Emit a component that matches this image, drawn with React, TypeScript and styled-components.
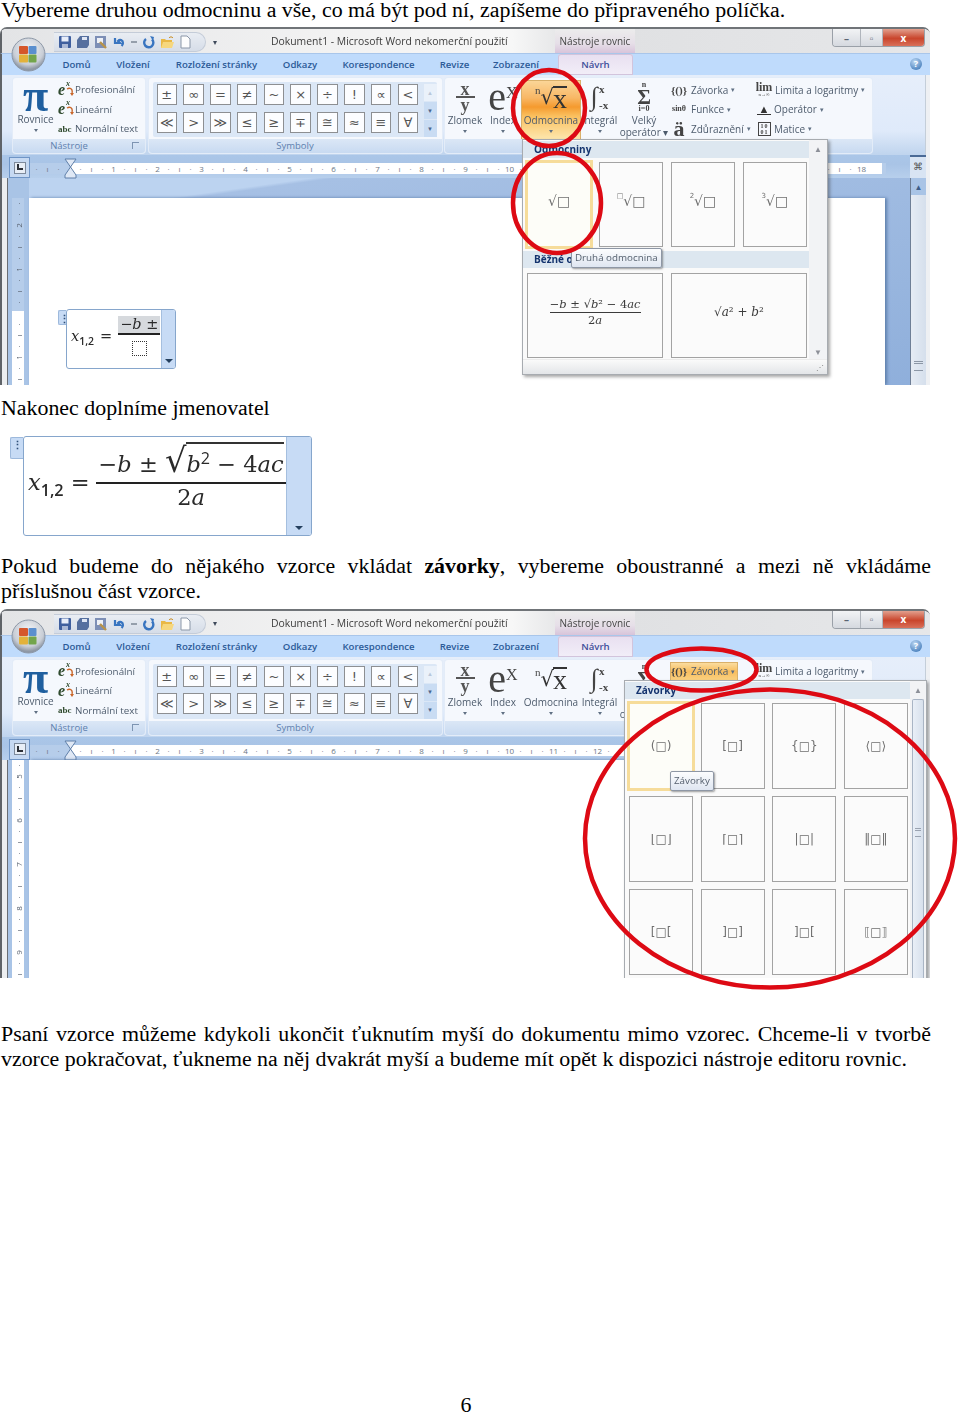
import React from "react";
import styled, { createGlobalStyle } from "styled-components";

const GlobalStyle = createGlobalStyle`
  html, body { margin: 0; padding: 0; background: #fff; }
  body { font-family: "Liberation Serif", "Times New Roman", serif; color: #000; }
`;

const UI_FONT = `"Open Sans", "Noto Sans", sans-serif`;
const MATH_FONT = `"DejaVu Serif", "Liberation Serif", serif`;

const Page = styled.div`
  width: 960px;
  height: 1414px;
  overflow: hidden;
  display: flex;
  flex-direction: column;
`;

const Para = styled.p<{ $top?: number; $justify?: boolean; $lh?: number }>`
  width: 930px;
  margin: ${(p) => p.$top ?? 0}px 0 0 1px;
  font-size: 21.9px;
  line-height: ${(p) => p.$lh ?? 25.5}px;
  text-align: ${(p) => (p.$justify ? "justify" : "left")};
  white-space: ${(p) => (p.$justify ? "normal" : "nowrap")};
`;

const PageNumber = styled.div`
  margin-top: auto;
  width: 932px;
  text-align: center;
  font-size: 21.9px;
  line-height: 18px;
`;

const ShotFrame = styled.div<{ $top: number; $h: number }>`
  position: relative;
  width: 930px;
  height: ${(p) => p.$h}px;
  margin-top: ${(p) => p.$top}px;
  flex: none;
`;

const Window = styled.div`
  width: 930px;
  height: 100%;
  display: flex;
  flex-direction: column;
  overflow: hidden;
  position: relative;
  border-radius: 7px 7px 0 0;
  border-top: 2px solid #707478;
  box-sizing: border-box;
  background: #eef0f3;
  font-family: ${UI_FONT};
  filter: blur(0.35px);
`;

/* title bar */
const TitleBar = styled.div`
  height: 24px;
  flex: none;
  display: flex;
  align-items: center;
  padding-left: 52px;
  background: linear-gradient(90deg, #e3e4e6 0%, #f2f2f2 35%, #f7f7f7 55%, #dfe0e2 62%, #e6e7e9 100%);
  border-left: 2px solid #5f6368;
  box-sizing: border-box;
`;

const Orb = styled.svg`
  position: absolute;
  left: 11px;
  top: 8px;
  width: 35px;
  height: 35px;
  z-index: 2;
`;

const QuickPill = styled.div`
  width: 152px;
  height: 20px;
  margin-top: 2px;
  display: flex;
  align-items: center;
  gap: 4px;
  padding-left: 4px;
  box-sizing: border-box;
  border-radius: 0 11px 11px 0;
  border: 1px solid #c4ccd8;
  border-left: none;
  background: linear-gradient(#e9edf3, #d6dde8);
`;

const QuickIcon = styled.svg<{ $w?: number }>`
  width: ${(p) => p.$w ?? 14}px;
  height: 14px;
  flex: none;
`;

const QuickArrow = styled.span`
  width: 65px;
  padding-left: 7px;
  box-sizing: border-box;
  font-size: 8px;
  color: #3f4a5a;
`;

const Title = styled.div`
  width: 284px;
  font-size: 10.4px;
  color: #3c3c3c;
  white-space: nowrap;
`;

const ContextTab = styled.div`
  width: 80px;
  height: 24px;
  display: flex;
  align-items: center;
  justify-content: center;
  font-size: 10px;
  color: #444;
  background: linear-gradient(#ececec, #e6dfe8 60%, #d8c4da);
`;

const WinControls = styled.div`
  display: flex;
  margin-left: auto;
  margin-right: 5px;
  height: 17px;
  align-self: flex-start;
  border: 1px solid #9aa0a8;
  border-top: none;
  border-radius: 0 0 4px 4px;
  overflow: hidden;
`;

const WinButton = styled.div<{ $w: number; $close?: boolean }>`
  width: ${(p) => p.$w}px;
  display: flex;
  align-items: center;
  justify-content: center;
  font-size: 10px;
  font-weight: 700;
  color: ${(p) => (p.$close ? "#fff" : "#5a6472")};
  background: ${(p) =>
    p.$close
      ? "linear-gradient(#e2a08e, #c9452c 55%, #d9705a)"
      : "linear-gradient(#f2f3f5, #d5d9df)"};
  border-right: ${(p) => (p.$close ? "none" : "1px solid #b0b5bc")};
`;

/* tabs */
const TabBar = styled.div`
  height: 22px;
  flex: none;
  display: flex;
  padding-left: 48px;
  background: #bfdbfc;
  border-top: 1px solid #a9c6ea;
  border-left: 2px solid #5f6368;
  box-sizing: border-box;
  position: relative;
`;

const Tab = styled.div<{ $w: number; $active?: boolean }>`
  width: ${(p) => p.$w}px;
  margin-left: ${(p) => (p.$active ? 8 : 0)}px;
  display: flex;
  align-items: center;
  justify-content: center;
  font-size: 9.6px;
  font-weight: 600;
  background: ${(p) => (p.$active ? "linear-gradient(#e8dff0, #f2eef8)" : "none")};
  border-radius: 3px 3px 0 0;
  box-shadow: ${(p) => (p.$active ? "inset 0 0 0 1px #d2c4dc" : "none")};
  color: ${(p) => (p.$active ? "#3f4f9a" : "#2b5a97")};
`;

const HelpDot = styled.div`
  position: absolute;
  right: 8px;
  top: 4px;
  width: 12px;
  height: 12px;
  border-radius: 50%;
  background: radial-gradient(circle at 40% 30%, #bcd7f2, #2d6bb0);
  color: #fff;
  font-size: 9px;
  font-weight: 700;
  line-height: 12px;
  text-align: center;
`;

/* ribbon */
const Ribbon = styled.div`
  height: 80px;
  flex: none;
  display: flex;
  gap: 3.5px;
  padding: 3px 0 2px 11px;
  box-sizing: border-box;
  background: linear-gradient(#e6eefa, #dfeafa 70%, #bfd4ee);
  border-left: 2px solid #5f6368;
  margin-right: 4px;
  border-right: 1px solid #c4ced9;
`;

const Group = styled.div<{ $w: number }>`
  width: ${(p) => p.$w}px;
  display: flex;
  flex-direction: column;
  border-radius: 3px;
  overflow: hidden;
  background: #f5f8fd;
  box-shadow: 0 0 0 1px #e3ecf8;
`;

const GroupBody = styled.div`
  flex: 1;
  display: flex;
  min-height: 0;
`;

const GroupFooter = styled.div<{ $shift?: number }>`
  height: 14px;
  flex: none;
  position: relative;
  text-align: center;
  padding-right: ${(p) => p.$shift ?? 0}px;
  font-size: 9.5px;
  line-height: 13px;
  color: #5d80ae;
  background: linear-gradient(#dbe7f6, #c8daf1);
`;

const Launcher = styled.span`
  position: absolute;
  right: 6px;
  top: 3px;
  width: 6px;
  height: 6px;
  border: 1px solid #7d94b2;
  border-width: 1px 0 0 1px;
`;

const PiColumn = styled.div`
  width: 45px;
  display: flex;
  flex-direction: column;
  align-items: center;
  flex: none;
`;

const PiGlyph = styled.div`
  height: 35px;
  font-family: "Liberation Serif", serif;
  font-size: 46px;
  line-height: 35px;
  color: #1f5f9f;
  font-weight: 700;
`;

const SmallLabel = styled.div`
  font-size: 10px;
  line-height: 12px;
  color: #4d5b6c;
  text-align: center;
  white-space: nowrap;
`;

const DropArrow = styled.div`
  width: 0;
  height: 0;
  margin: 4px auto 0;
  border: 2.5px solid transparent;
  border-top: 3px solid #5f6f83;
  border-bottom: none;
`;

const ToolColumn = styled.div`
  display: flex;
  flex-direction: column;
  padding-top: 2px;
`;

const ToolRow = styled.div`
  height: 19.5px;
  display: flex;
  align-items: center;
  gap: 1px;
  font-size: 9.8px;
  color: #4d5b6c;
  white-space: nowrap;
`;

const ToolGlyph = styled.span<{ $small?: boolean }>`
  width: 16px;
  flex: none;
  font-family: "Liberation Serif", serif;
  font-style: ${(p) => (p.$small ? "normal" : "italic")};
  font-weight: 700;
  font-size: ${(p) => (p.$small ? 9 : 16)}px;
  line-height: 14px;
  color: #2f4a2e;
  position: relative;
`;

const ToolSup = styled.span`
  position: absolute;
  left: 8px;
  top: -3px;
  font-size: 8px;
  line-height: 8px;
`;

const ToolArrow = styled.svg`
  position: absolute;
  left: 8px;
  top: 4px;
  width: 8px;
  height: 9px;
`;

const SymbolGallery = styled.div`
  margin: 4px 0 0 4px;
  height: 55px;
  width: 284px;
  display: flex;
  background: #dbe7f6;
  border-radius: 2px;
  box-sizing: border-box;
  padding: 2px 0 0 4px;
`;

const SymbolGrid = styled.div`
  width: 267px;
  display: grid;
  grid-template-columns: repeat(10, 20.6px);
  grid-auto-rows: 21px;
  column-gap: 6.2px;
  row-gap: 6.5px;
`;

const SymbolCell = styled.div`
  display: flex;
  align-items: center;
  justify-content: center;
  background: #fcfdff;
  border: 1px solid #8d8f92;
  box-sizing: border-box;
  font-family: "DejaVu Sans", sans-serif;
  font-size: 13px;
  color: #555;
`;

const GalleryScroll = styled.div`
  width: 13px;
  margin-left: 1px;
  display: flex;
  flex-direction: column;
  gap: 1px;
`;

const GalleryStep = styled.div<{ $dim?: boolean }>`
  flex: 1;
  display: flex;
  align-items: center;
  justify-content: center;
  font-size: 6px;
  background: ${(p) => (p.$dim ? "#eaf1fa" : "#c9dcf3")};
  color: ${(p) => (p.$dim ? "#b9c7d9" : "#4a668c")};
`;

const StructButton = styled.div<{ $w: number; $on?: boolean }>`
  width: ${(p) => p.$w}px;
  flex: none;
  margin-top: 2px;
  height: 60px;
  display: flex;
  flex-direction: column;
  align-items: center;
  background: ${(p) =>
    p.$on ? "linear-gradient(#fbd79a, #f8b765 30%, #f59a2e 45%, #fac05f 60%, #fde8b0)" : "none"};
  box-shadow: ${(p) => (p.$on ? "inset 0 0 0 1px #d9b06a" : "none")};
`;

const StructIcon = styled.div`
  height: 34px;
  display: flex;
  align-items: center;
  justify-content: center;
  font-family: "Liberation Serif", serif;
  color: #444;
  white-space: nowrap;
`;

const FracIcon = styled.div`
  display: flex;
  flex-direction: column;
  align-items: center;
  font-weight: 700;
  font-size: 18px;
  line-height: 13px;
  color: #555;

  span + span {
    border-top: 2px solid #555;
    padding: 1px 5px 0;
  }
`;

const Big = styled.span<{ $size: number }>`
  font-size: ${(p) => p.$size}px;
  line-height: 34px;
`;

const Corner = styled.span<{ $size: number; $top: number }>`
  align-self: flex-start;
  margin-top: ${(p) => p.$top}px;
  font-size: ${(p) => p.$size}px;
  line-height: ${(p) => p.$size}px;
`;

const RootSign = styled.span`
  font-family: "DejaVu Sans", sans-serif;
  font-size: 21px;
  line-height: 26px;
  color: #333;
`;

const RootBody = styled.span`
  font-size: 28px;
  line-height: 21px;
  border-top: 2px solid #333;
  margin-left: -1px;
  color: #333;
`;

const LimitsIcon = styled.div`
  display: flex;
  align-items: center;
  gap: 1px;
  font-size: 26px;
`;

const LimitsText = styled.div`
  display: flex;
  flex-direction: column;
  font-size: 11px;
  line-height: 16px;
  font-weight: 700;
`;

const SigmaIcon = styled.div`
  display: flex;
  flex-direction: column;
  align-items: center;
  font-size: 21px;
  line-height: 16px;
  font-weight: 700;

  small {
    font-size: 8px;
    line-height: 8px;
  }
`;

const TwoLine = styled(SmallLabel)`
  line-height: 12px;
  display: flex;
  flex-direction: column;
`;

const ListColumn = styled.div<{ $w: number }>`
  width: ${(p) => p.$w}px;
  flex: none;
  padding-top: 2px;
`;

const ListRow = styled.div<{ $on?: boolean }>`
  height: 19.5px;
  display: flex;
  align-items: center;
  gap: 3px;
  font-size: 10px;
  color: #4d5b6c;
  white-space: nowrap;
  width: ${(p) => (p.$on ? "68px" : "auto")};
  background: ${(p) => (p.$on ? "linear-gradient(#fbe0a6, #f8bd5e 50%, #fbd384)" : "none")};
  box-shadow: ${(p) => (p.$on ? "inset 0 0 0 1px #d9b06a" : "none")};
`;

const ListGlyph = styled.span<{ $w: number; $size?: number }>`
  width: ${(p) => p.$w}px;
  flex: none;
  text-align: center;
  font-family: "Liberation Serif", serif;
  font-weight: 700;
  font-size: ${(p) => p.$size ?? 11}px;
  line-height: 14px;
  color: #444;
`;

const LimGlyph = styled(ListGlyph)`
  line-height: 9px;
  display: flex;
  flex-direction: column;
  align-items: center;

  small {
    font-size: 5px;
    line-height: 5px;
    font-weight: 400;
  }
`;

const OperatorGlyph = styled(ListGlyph)`
  line-height: 10px;
  border-bottom: 1px solid #333;
  width: 14px;
  margin-left: 1px;
  color: #333;
`;

const MatrixGlyph = styled(ListGlyph)`
  font-size: 6px;
  line-height: 6px;
  width: 13px;
  margin-left: 2px;
  border: solid #444;
  border-width: 1px 1px;
  box-sizing: border-box;
  letter-spacing: 1px;
`;

const Caret = styled.span`
  font-size: 7px;
  color: #5f6f83;
`;

/* ruler */
const RulerRow = styled.div`
  height: 23px;
  flex: none;
  display: flex;
  align-items: flex-start;
  background: linear-gradient(#aac6e8, #a9c4e6 40%, #b7cfec);
  border-left: 2px solid #5f6368;
  box-sizing: border-box;
  position: relative;
  margin-right: 4px;
`;

const RulerCorner = styled.div`
  width: 21px;
  height: 21px;
  margin: 2px 0 0 7px;
  flex: none;
  box-sizing: border-box;
  border: 1px solid #6f95c6;
  background: #c6d9f2;
  display: flex;
  align-items: center;
  justify-content: center;

  &::before {
    content: "";
    position: absolute;
    width: 10px;
    height: 10px;
    background: #e8eef6;
    border: 1px solid #7d8a9c;
  }

  &::after {
    content: "";
    position: relative;
    width: 4px;
    height: 4px;
    margin: -1px 0 0 1px;
    border: solid #2c3038;
    border-width: 0 0 2px 2px;
  }
`;

const RulerStrip = styled.div`
  width: 856px;
  height: 11px;
  margin: 8px 0 0 0;
  flex: none;
  display: flex;
  padding-left: 1px;
  box-sizing: border-box;
  overflow: hidden;
  background: linear-gradient(90deg, #b6cdea 0 41px, #fff 41px 852px, #b6cdea 852px);
`;

const RulerSlot = styled.div`
  width: 11px;
  flex: none;
  text-align: center;
  font-family: ${UI_FONT};
  font-size: 8px;
  line-height: 11px;
  color: #6d7785;
`;

const IndentMarker = styled.svg`
  position: absolute;
  left: 62px;
  top: 3px;
  width: 13px;
  height: 21px;
`;

const RulerToggle = styled.div`
  position: absolute;
  right: 0;
  top: 0;
  width: 16px;
  height: 23px;
  background: #d8e4f3;
  border-top: 2px solid #4a6a96;
  box-sizing: border-box;
  font-size: 10px;
  line-height: 18px;
  text-align: center;
  color: #555;
`;

/* document area */
const DocRow = styled.div`
  flex: 1;
  min-height: 0;
  display: flex;
  border-left: 2px solid #5f6368;
  margin-right: 4px;
`;

const LeftEdge = styled.div`
  width: 5px;
  flex: none;
  background: #eceef0;
  border-right: 1px solid #6a6e74;
`;

const LeftDesk = styled.div`
  width: 21px;
  flex: none;
  background: #a9c4e6;
  padding-left: 4px;
  box-sizing: border-box;
`;

const VRuler = styled.div<{ $top: number; $blue: number }>`
  width: 12px;
  height: 100%;
  margin-top: ${(p) => p.$top}px;
  overflow: hidden;
  background: linear-gradient(#b6cdea 0 ${(p) => p.$blue}px, #fff ${(p) => p.$blue}px);
`;

const VSlot = styled.div`
  height: 11px;
  display: flex;
  align-items: center;
  justify-content: center;
  font-size: 8px;
  line-height: 11px;
  color: #5a6472;
  transform: rotate(-90deg);
`;

const Desk = styled.div<{ $top: number }>`
  flex: 1;
  min-width: 0;
  padding-top: ${(p) => p.$top}px;
  background: linear-gradient(172deg, #bcd3f0 0 12%, #a6c0e4 13%, #8fafdb 100%);
`;

const DocPage = styled.div`
  width: 856px;
  height: 100%;
  background: #fff;
  box-shadow: 2px 0 3px #5e7fac;
  padding: 111px 0 0 37px;
  box-sizing: border-box;
  position: relative;
`;

const SideScroll = styled.div`
  width: 16px;
  flex: none;
  background: linear-gradient(90deg, #e6ecf4, #d5dfec);
  display: flex;
  flex-direction: column;
  border-left: 1px solid #6f7f96;
  box-sizing: border-box;
`;

const SideArrow = styled.div`
  height: 17px;
  flex: none;
  background: #a9c4e6;
  font-size: 8px;
  text-align: center;
  line-height: 17px;
  color: #3d5d88;
`;

const SideGrip = styled.div`
  margin: auto 3px 14px;
  height: 6px;
  border-top: 3px double #8c97a6;
  border-bottom: 1px solid #8c97a6;
`;

/* equation */
const EquationWrap = styled.div<{ $h: number; $w: number; $left: number; $top?: number; $tab: number }>`
  position: relative;
  width: ${(p) => p.$w}px;
  height: ${(p) => p.$h}px;
  margin: ${(p) => p.$top ?? 0}px 0 0 ${(p) => p.$left}px;
  box-sizing: border-box;
  flex: none;
  border: 1px solid #86a6cc;
  border-radius: 3px;
  display: flex;
  background: #fff;
  padding-right: ${(p) => p.$tab}px;
  filter: blur(0.3px);
`;

const EquationTab = styled.div<{ $w: number }>`
  position: absolute;
  right: 0;
  top: 0;
  bottom: 0;
  width: ${(p) => p.$w}px;
  background: #c7dbf5;
  border-left: 1px solid #a5bfdf;
  border-radius: 0 2px 2px 0;

  &::after {
    content: "";
    position: absolute;
    left: 50%;
    bottom: 5px;
    margin-left: -4px;
    border: 4px solid transparent;
    border-top: 4px solid #25405f;
    border-bottom: none;
  }
`;

const EquationHandle = styled.div<{ $w: number; $h: number }>`
  position: absolute;
  left: -${(p) => p.$w + 1}px;
  top: 0;
  width: ${(p) => p.$w}px;
  height: ${(p) => p.$h}px;
  background: #c7dbf5;
  border: 1px solid #9db9dc;
  border-right: none;
  border-radius: 2px 0 0 2px;
  box-sizing: border-box;
  color: #2f4f78;
  font-size: 11px;
  line-height: 13px;
  text-align: center;
  font-weight: 700;
  padding-top: 1px;
`;

const MathRow = styled.div<{ $size: number; $pad: number; $gap: number }>`
  display: flex;
  align-items: center;
  gap: ${(p) => p.$gap}px;
  padding: 0 0 ${(p) => p.$pad}px 4px;
  font-family: ${MATH_FONT};
  font-size: ${(p) => p.$size}px;
  color: #2a2a2a;
  white-space: nowrap;
`;

const MathVar = styled.span`
  font-style: italic;
`;

const MathSub = styled.sub`
  font-size: 0.72em;
  font-style: normal;
  line-height: 0;
  font-family: ${UI_FONT};
  font-weight: 600;
`;

const MathSup = styled.sup`
  font-size: 0.72em;
  line-height: 0;
  font-family: ${UI_FONT};
`;

const Fraction = styled.div`
  display: flex;
  flex-direction: column;
  align-items: center;
`;

const Numerator = styled.div<{ $shade?: boolean; $gap?: number }>`
  padding: 0 2px ${(p) => p.$gap ?? 1}px;
  line-height: 1.12;
  background: ${(p) => (p.$shade ? "#d6d9dd" : "none")};
`;

const Denominator = styled.div<{ $gap?: number }>`
  align-self: stretch;
  text-align: center;
  border-top: 2px solid #222;
  padding-top: ${(p) => p.$gap ?? 2}px;
  line-height: 1.2;
`;

const RadicalSign = styled.span`
  font-size: 1.5em;
  line-height: 0;
`;

const RadicalBody = styled.span`
  border-top: 2px solid #333;
  padding-top: 7px;
`;

const EmptySlot = styled.span`
  display: block;
  width: 13px;
  height: 13px;
  margin: 4px auto 0;
  border: 1px dotted #333;
`;

/* drop-down galleries */
const Popup = styled.div<{ $x: number; $y: number; $w: number; $h: number }>`
  position: absolute;
  left: ${(p) => p.$x}px;
  top: ${(p) => p.$y}px;
  width: ${(p) => p.$w}px;
  height: ${(p) => p.$h}px;
  box-sizing: border-box;
  background: #fafafa;
  border: 1px solid #a7abb0;
  box-shadow: 2px 2px 3px rgba(60, 60, 60, 0.45);
  z-index: 3;
  display: flex;
`;

const PopupMain = styled.div`
  flex: 1;
  min-width: 0;
`;

const PopupHead = styled.div<{ $top?: number }>`
  height: 17px;
  margin-top: ${(p) => p.$top ?? 1}px;
  padding-left: 11px;
  font-size: 10px;
  font-weight: 700;
  line-height: 16px;
  color: #14336e;
  background: #dde7f0;
`;

const TileGrid = styled.div<{ $cols: number; $pad: number }>`
  display: grid;
  grid-template-columns: repeat(${(p) => p.$cols}, 1fr);
  gap: 7px 7.5px;
  padding: ${(p) => p.$pad}px 2px 4px 4px;
`;

const Tile = styled.div<{ $h: number; $selected?: boolean; $lift?: number }>`
  height: ${(p) => p.$h}px;
  box-sizing: border-box;
  background: ${(p) => (p.$selected ? "#fdfdf8" : "#fbfbfb")};
  border: 1px solid #a3a3a3;
  outline: ${(p) => (p.$selected ? "3px solid #f6dc9a" : "none")};
  outline-offset: -1px;
  padding-bottom: ${(p) => p.$lift ?? 0}px;
  display: flex;
  align-items: center;
  justify-content: center;
  font-family: "DejaVu Sans", sans-serif;
  font-size: 12px;
  color: #6f6f6f;
  white-space: nowrap;
`;

const RootIndex = styled.span`
  align-self: center;
  margin-bottom: 8px;
  font-size: 7px;
  line-height: 7px;
`;

const TileRoot = styled.span`
  font-size: 14px;
`;

const TileMath = styled.div<{ $size: number }>`
  font-family: ${MATH_FONT};
  font-size: ${(p) => p.$size}px;
  color: #3b3b3b;
  display: flex;
  flex-direction: column;
  align-items: center;
  line-height: 1.3;
`;

const TileBar = styled.div`
  align-self: stretch;
  text-align: center;
  border-top: 1px solid #3b3b3b;
`;

const PopupSideBar = styled.div<{ $w: number }>`
  width: ${(p) => p.$w}px;
  flex: none;
  display: flex;
  flex-direction: column;
  align-items: center;
  background: #f2f3f5;
  font-size: 8px;
  color: #8d9098;
  padding-top: 3px;
  box-sizing: border-box;
`;

const PopupDown = styled.span`
  margin-top: auto;
  margin-bottom: 17px;
`;

const PopupThumb = styled.div`
  flex: 1;
  width: 12px;
  margin-top: 4px;
  background: linear-gradient(90deg, #e9eff7, #d7e0ec);
  border: 1px solid #a9b5c5;
  border-bottom: none;
  border-radius: 2px 2px 0 0;
  box-sizing: border-box;
  position: relative;

  &::after {
    content: "";
    position: absolute;
    left: 2px;
    right: 2px;
    top: 46%;
    height: 5px;
    border-top: 3px double #9aa3b1;
    border-bottom: 1px solid #9aa3b1;
  }
`;

const PopupStatus = styled.div`
  position: absolute;
  left: 0;
  right: 0;
  bottom: 0;
  height: 15px;
  background: linear-gradient(#fafafa, #e3e5e8);
  border-top: 1px solid #ececec;
  font-size: 8px;
  line-height: 14px;
  text-align: right;
  padding-right: 3px;
  box-sizing: border-box;
  color: #888;
`;

const Tooltip = styled.div<{ $x: number; $y: number }>`
  position: absolute;
  left: ${(p) => p.$x}px;
  top: ${(p) => p.$y}px;
  z-index: 4;
  padding: 2px 3px;
  font-size: 9.8px;
  line-height: 14px;
  color: #55606e;
  background: linear-gradient(#fcfdfe, #dfe6f1);
  border: 1px solid #8e97a5;
  border-radius: 2px;
  box-shadow: 1px 1px 2px rgba(60, 60, 60, 0.5);
  white-space: nowrap;
`;

const RedMarks = styled.svg`
  position: absolute;
  left: 0;
  top: 0;
  width: 930px;
  height: 100%;
  overflow: visible;
  z-index: 6;
  pointer-events: none;
`;

const RedEllipse = styled.ellipse`
  fill: none;
  stroke: #dd0a14;
  stroke-width: 4.5;
`;

const symbols = ["±", "∞", "=", "≠", "~", "×", "÷", "!", "∝", "<", "≪", ">", "≫", "≤", "≥", "∓", "≅", "≈", "≡", "∀"];

const tabs: [string, number][] = [
  ["Domů", 53],
  ["Vložení", 60],
  ["Rozložení stránky", 107],
  ["Odkazy", 60],
  ["Korespondence", 97],
  ["Revize", 55],
  ["Zobrazení", 68],
];

const rulerLabels = ["·", "ı", "·", ""].concat(
  ...Array.from({ length: 18 }, (_, i) => ["·", "ı", "·", String(i + 1)])
);

const rootIndexes = ["", "□", "2", "3"];
const bracketTiles = ["(□)", "[□]", "{□}", "⟨□⟩", "⌊□⌋", "⌈□⌉", "|□|", "‖□‖", "[□[", "]□]", "]□[", "⟦□⟧"];

const vLabelsTop = ["·", "·", "2", "·", "ı", "·", "1", "·", "ı", "·", "", "·", "ı", "·", "1", "·", "ı"];
const vLabelsBottom = ["·", "5", "·", "ı", "·", "6", "·", "ı", "·", "7", "·", "ı", "·", "8", "·", "ı", "·", "9", "·", "ı", "·"];

const Quick = () => (
  <>
    <QuickIcon viewBox="0 0 14 14">
      <rect x="1" y="1" width="12" height="12" rx="1" fill="#3f5f9e" />
      <rect x="3.5" y="1.5" width="7" height="5" fill="#e8eefa" />
      <rect x="4" y="9" width="6" height="4" fill="#aab8d6" />
    </QuickIcon>
    <QuickIcon viewBox="0 0 14 14">
      <path d="M4 1h9v9l-2 3H1V5z" fill="#56709f" />
      <rect x="6" y="2" width="5" height="3" fill="#dfe6f4" />
    </QuickIcon>
    <QuickIcon viewBox="0 0 14 14">
      <rect x="1" y="1" width="11" height="12" fill="#7d8fb6" />
      <rect x="3" y="3" width="6" height="5" fill="#eef1f7" />
      <path d="M6 7l6 6" stroke="#b9934a" strokeWidth="2.4" />
    </QuickIcon>
    <QuickIcon viewBox="0 0 14 14">
      <path d="M3 3v5h5L6 6c2-2 5-1 5 2 0 1-.6 2-1.400 3" fill="none" stroke="#3975c0" strokeWidth="2.2" />
    </QuickIcon>
    <QuickIcon viewBox="0 0 8 14" $w={8}>
      <path d="M1 7h6" stroke="#7d8794" strokeWidth="1.4" />
    </QuickIcon>
    <QuickIcon viewBox="0 0 14 14">
      <path d="M4 4a4.600 4.600 0 1 0 6 .4" fill="none" stroke="#3975c0" strokeWidth="2.4" />
      <path d="M8 1l4 1-1 4z" fill="#3975c0" />
    </QuickIcon>
    <QuickIcon viewBox="0 0 14 14">
      <path d="M1 4h4l1 1h6v8H1z" fill="#e9b846" />
      <path d="M3 7h11l-2 6H1z" fill="#f6d77e" />
      <path d="M9 3c1-1.500 3-1.500 4 0" stroke="#c98a1c" fill="none" />
    </QuickIcon>
    <QuickIcon viewBox="0 0 14 14">
      <path d="M3 1h6l3 3v9H3z" fill="#fdfdfd" stroke="#8b97a8" />
    </QuickIcon>
  </>
);

const OfficeOrb = ({ id }: { id: string }) => (
  <Orb viewBox="0 0 35 35">
    <defs>
      <radialGradient id={id} cx="50%" cy="35%" r="60%">
        <stop offset="0%" stopColor="#f5f6f8" />
        <stop offset="75%" stopColor="#c9ced6" />
        <stop offset="100%" stopColor="#8f98a5" />
      </radialGradient>
    </defs>
    <circle cx="17.5" cy="17.5" r="16.5" fill={`url(#${id})`} stroke="#8c97a6" />
    <rect x="8" y="9" width="9" height="8" rx="1" fill="#d5572b" />
    <rect x="17.5" y="9" width="8" height="8" rx="1" fill="#5b8fce" />
    <rect x="8" y="17.5" width="9" height="8" rx="1" fill="#e3b23a" />
    <rect x="17.5" y="17.5" width="8" height="8" rx="1" fill="#73a54b" />
  </Orb>
);

const ExGlyph = () => (
  <ToolGlyph>
    e<ToolSup>x</ToolSup>
    <ToolArrow viewBox="0 0 8 9">
      <path d="M1 2c3-2 6 0 5 4" fill="none" stroke="#c9662a" strokeWidth="1.400" />
      <path d="M4 6h4L6 9z" fill="#c9662a" />
    </ToolArrow>
  </ToolGlyph>
);

const Chrome = ({ highlight, id }: { highlight: "root" | "bracket"; id: string }) => (
  <>
    <OfficeOrb id={id} />
    <TitleBar>
      <QuickPill>
        <Quick />
      </QuickPill>
      <QuickArrow>▾</QuickArrow>
      <Title>Dokument1 - Microsoft Word nekomerční použití</Title>
      <ContextTab>Nástroje rovnic</ContextTab>
      <WinControls>
        <WinButton $w={27}>–</WinButton>
        <WinButton $w={21}>▫</WinButton>
        <WinButton $w={41} $close>
          x
        </WinButton>
      </WinControls>
    </TitleBar>
    <TabBar>
      {tabs.map(([name, w]) => (
        <Tab key={name} $w={w}>
          {name}
        </Tab>
      ))}
      <Tab $w={75} $active>
        Návrh
      </Tab>
      <HelpDot>?</HelpDot>
    </TabBar>
    <Ribbon>
      <Group $w={132}>
        <GroupBody>
          <PiColumn>
            <PiGlyph>π</PiGlyph>
            <SmallLabel>Rovnice</SmallLabel>
            <DropArrow />
          </PiColumn>
          <ToolColumn>
            <ToolRow>
              <ExGlyph />
              Profesionální
            </ToolRow>
            <ToolRow>
              <ExGlyph />
              Lineární
            </ToolRow>
            <ToolRow>
              <ToolGlyph $small>abc</ToolGlyph>Normální text
            </ToolRow>
          </ToolColumn>
        </GroupBody>
        <GroupFooter $shift={20}>
          Nástroje
          <Launcher />
        </GroupFooter>
      </Group>
      <Group $w={293}>
        <GroupBody>
          <SymbolGallery>
            <SymbolGrid>
              {symbols.map((s) => (
                <SymbolCell key={s}>{s}</SymbolCell>
              ))}
            </SymbolGrid>
            <GalleryScroll>
              <GalleryStep $dim>▲</GalleryStep>
              <GalleryStep>▼</GalleryStep>
              <GalleryStep>▼</GalleryStep>
            </GalleryScroll>
          </SymbolGallery>
        </GroupBody>
        <GroupFooter>Symboly</GroupFooter>
      </Group>
      <Group $w={427}>
        <GroupBody>
          <StructButton $w={40}>
            <StructIcon>
              <FracIcon>
                <span>x</span>
                <span>y</span>
              </FracIcon>
            </StructIcon>
            <SmallLabel>Zlomek</SmallLabel>
            <DropArrow />
          </StructButton>
          <StructButton $w={36}>
            <StructIcon>
              <Big $size={40}>e</Big>
              <Corner $size={16} $top={5}>
                X
              </Corner>
            </StructIcon>
            <SmallLabel>Index</SmallLabel>
            <DropArrow />
          </StructButton>
          <StructButton $w={60} $on={highlight === "root"}>
            <StructIcon>
              <Corner $size={11} $top={5}>
                n
              </Corner>
              <RootSign>√</RootSign>
              <RootBody>x</RootBody>
            </StructIcon>
            <SmallLabel>Odmocnina</SmallLabel>
            <DropArrow />
          </StructButton>
          <StructButton $w={37}>
            <StructIcon>
              <LimitsIcon>
                ∫
                <LimitsText>
                  <span>x</span>
                  <span>-x</span>
                </LimitsText>
              </LimitsIcon>
            </StructIcon>
            <SmallLabel>Integrál</SmallLabel>
            <DropArrow />
          </StructButton>
          <StructButton $w={52}>
            <StructIcon>
              <SigmaIcon>
                <small>n</small>Σ<small>i=0</small>
              </SigmaIcon>
            </StructIcon>
            <TwoLine>
              <span>Velký</span>
              <span>operátor ▾</span>
            </TwoLine>
          </StructButton>
          <ListColumn $w={86}>
            <ListRow $on={highlight === "bracket"}>
              <ListGlyph $w={18}>{"{()}"}</ListGlyph>Závorka <Caret>▾</Caret>
            </ListRow>
            <ListRow>
              <ListGlyph $w={18} $size={8}>
                sinθ
              </ListGlyph>
              Funkce <Caret>▾</Caret>
            </ListRow>
            <ListRow>
              <ListGlyph $w={18} $size={22}>
                ä
              </ListGlyph>
              Zdůraznění <Caret>▾</Caret>
            </ListRow>
          </ListColumn>
          <ListColumn $w={110}>
            <ListRow>
              <LimGlyph $w={16} $size={12}>
                lim
                <small>n→∞</small>
              </LimGlyph>
              Limita a logaritmy <Caret>▾</Caret>
            </ListRow>
            <ListRow>
              <OperatorGlyph $w={14}>▲</OperatorGlyph>
              Operátor <Caret>▾</Caret>
            </ListRow>
            <ListRow>
              <MatrixGlyph $w={13}>
                10
                <br />
                01
              </MatrixGlyph>
              Matice <Caret>▾</Caret>
            </ListRow>
          </ListColumn>
        </GroupBody>
        <GroupFooter />
      </Group>
    </Ribbon>
    <RulerRow>
      <RulerCorner />
      <RulerStrip>
        {rulerLabels.map((label, i) => (
          <RulerSlot key={i}>{label}</RulerSlot>
        ))}
      </RulerStrip>
      <IndentMarker viewBox="0 0 13 21">
        <path d="M1 1h11L6.500 9zM6.500 9L1 17v3h11v-3z" fill="#dfe8f5" stroke="#5f7fa8" />
      </IndentMarker>
      <RulerToggle>⌘</RulerToggle>
    </RulerRow>
  </>
);

const SideBar = () => (
  <SideScroll>
    <SideArrow>▲</SideArrow>
    <SideGrip />
  </SideScroll>
);

export default function App() {
  return (
    <Page>
      <GlobalStyle />
      <Para $lh={20}>Vybereme druhou odmocninu a vše, co má být pod ní, zapíšeme do připraveného políčka.</Para>

      <ShotFrame $top={7} $h={358}>
        <Window>
          <Chrome highlight="root" id="orb-a" />
          <DocRow>
            <LeftEdge />
            <LeftDesk>
              <VRuler $top={20} $blue={113}>
                {vLabelsTop.map((l, i) => (
                  <VSlot key={i}>{l}</VSlot>
                ))}
              </VRuler>
            </LeftDesk>
            <Desk $top={20}>
              <DocPage>
                <EquationWrap $w={110} $h={60} $left={0} $tab={13}>
                  <EquationHandle $w={8} $h={15}>
                    ⋮
                  </EquationHandle>
                  <MathRow $size={14.5} $pad={6} $gap={6}>
                    <span>
                      <MathVar>x</MathVar>
                      <MathSub>1,2</MathSub>
                    </span>
                    =
                    <Fraction>
                      <Numerator $shade>
                        <MathVar>−b</MathVar> ±
                      </Numerator>
                      <Denominator>
                        <EmptySlot />
                      </Denominator>
                    </Fraction>
                  </MathRow>
                  <EquationTab $w={13} />
                </EquationWrap>
              </DocPage>
            </Desk>
            <SideBar />
          </DocRow>
          <Popup $x={522} $y={110} $w={306} $h={236}>
            <PopupMain>
              <PopupHead>Odmocniny</PopupHead>
              <TileGrid $cols={4} $pad={4}>
                {rootIndexes.map((idx, i) => (
                  <Tile key={i} $h={85} $lift={8} $selected={i === 0}>
                    {idx && <RootIndex>{idx}</RootIndex>}
                    <TileRoot>√□</TileRoot>
                  </Tile>
                ))}
              </TileGrid>
              <PopupHead $top={0}>Běžné odmocniny</PopupHead>
              <TileGrid $cols={2} $pad={5}>
                <Tile $h={85} $lift={6}>
                  <TileMath $size={11.5}>
                    <span>
                      <MathVar>−b</MathVar> ± √<MathVar>b</MathVar>² − 4<MathVar>ac</MathVar>
                    </span>
                    <TileBar>
                      2<MathVar>a</MathVar>
                    </TileBar>
                  </TileMath>
                </Tile>
                <Tile $h={85} $lift={6}>
                  <TileMath $size={12}>
                    <span>
                      √<MathVar>a</MathVar>² + <MathVar>b</MathVar>²
                    </span>
                  </TileMath>
                </Tile>
              </TileGrid>
            </PopupMain>
            <PopupSideBar $w={18}>
              ▲<PopupDown>▼</PopupDown>
            </PopupSideBar>
            <PopupStatus>⋰</PopupStatus>
          </Popup>
          <Tooltip $x={571} $y={219}>
            Druhá odmocnina
          </Tooltip>
        </Window>
        <RedMarks viewBox="0 0 930 358">
          <RedEllipse cx="549" cy="81" rx="36" ry="38" />
          <RedEllipse cx="557" cy="176" rx="44" ry="50" />
        </RedMarks>
      </ShotFrame>

      <Para $top={10}>Nakonec doplníme jmenovatel</Para>

      <EquationWrap $w={289} $h={100} $left={23} $top={15} $tab={24}>
        <EquationHandle $w={13} $h={22}>
          ⋮
        </EquationHandle>
        <MathRow $size={22.5} $pad={8} $gap={7}>
          <span>
            <MathVar>x</MathVar>
            <MathSub>1,2</MathSub>
          </span>
          =
          <Fraction>
            <Numerator $gap={5}>
              <MathVar>−b</MathVar> ± <RadicalSign>√</RadicalSign>
              <RadicalBody>
                <MathVar>b</MathVar>
                <MathSup>2</MathSup> − 4<MathVar>ac</MathVar>
              </RadicalBody>
            </Numerator>
            <Denominator $gap={0}>
              2<MathVar>a</MathVar>
            </Denominator>
          </Fraction>
        </MathRow>
        <EquationTab $w={24} />
      </EquationWrap>

      <Para $top={17} $justify>
        Pokud budeme do nějakého vzorce vkládat <b>závorky</b>, vybereme oboustranné a mezi ně vkládáme příslušnou část vzorce.
      </Para>

      <ShotFrame $top={5} $h={369}>
        <Window>
          <Chrome highlight="bracket" id="orb-b" />
          <DocRow>
            <LeftEdge />
            <LeftDesk>
              <VRuler $top={0} $blue={0}>
                {vLabelsBottom.map((l, i) => (
                  <VSlot key={i}>{l}</VSlot>
                ))}
              </VRuler>
            </LeftDesk>
            <Desk $top={0}>
              <DocPage />
            </Desk>
            <SideBar />
          </DocRow>
          <Popup $x={624} $y={69} $w={303} $h={300}>
            <PopupMain>
              <PopupHead>Závorky</PopupHead>
              <TileGrid $cols={4} $pad={4}>
                {bracketTiles.map((t, i) => (
                  <Tile key={t} $h={86} $selected={i === 0}>
                    {t}
                  </Tile>
                ))}
              </TileGrid>
            </PopupMain>
            <PopupSideBar $w={16}>
              ▲
              <PopupThumb />
            </PopupSideBar>
          </Popup>
          <Tooltip $x={670} $y={160}>
            Závorky
          </Tooltip>
        </Window>
        <RedMarks viewBox="0 0 930 369">
          <RedEllipse cx="701.5" cy="60.5" rx="55" ry="21" />
          <RedEllipse cx="770" cy="229.5" rx="185" ry="149" />
        </RedMarks>
      </ShotFrame>

      <Para $top={43} $justify>
        Psaní vzorce můžeme kdykoli ukončit ťuknutím myší do dokumentu mimo vzorec. Chceme-li v tvorbě vzorce pokračovat, ťukneme na něj dvakrát myší a budeme mít opět k dispozici nástroje editoru rovnic.
      </Para>

      <PageNumber>6</PageNumber>
    </Page>
  );
}
